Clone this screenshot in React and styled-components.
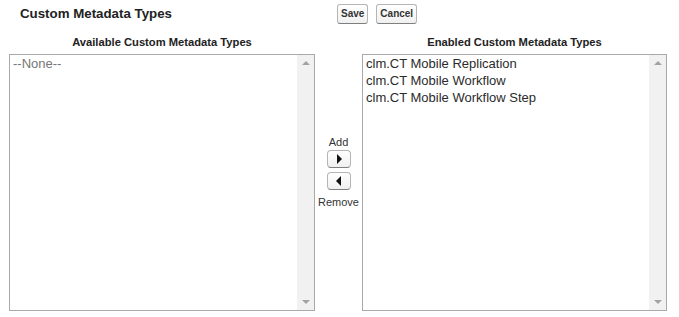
import styled, { createGlobalStyle } from "styled-components";

const GlobalStyle = createGlobalStyle`
  body {
    margin: 0;
    background: #ffffff;
    font-family: "Liberation Sans", Arial, sans-serif;
    color: #333;
  }
`;

const enabledTypes = [
  "clm.CT Mobile Replication",
  "clm.CT Mobile Workflow",
  "clm.CT Mobile Workflow Step",
];

const App = () => {
  return (
    <>
      <GlobalStyle />
      <Page>
        <Header>
          <Title>Custom Metadata Types</Title>
          <ButtonGroup>
            <Button>Save</Button>
            <Button>Cancel</Button>
          </ButtonGroup>
        </Header>
        <Columns>
          <Column $width={306}>
            <ColumnLabel>Available Custom Metadata Types</ColumnLabel>
            <ListBox>
              <Options>
                <Option $muted>--None--</Option>
              </Options>
              <Scrollbar>
                <ArrowUp />
                <ArrowDown />
              </Scrollbar>
            </ListBox>
          </Column>
          <Middle>
            <SmallText>Add</SmallText>
            <ArrowButton>
              <TriRight />
            </ArrowButton>
            <ArrowButton>
              <TriLeft />
            </ArrowButton>
            <SmallText $gap={3}>Remove</SmallText>
          </Middle>
          <Column $width={305}>
            <ColumnLabel>Enabled Custom Metadata Types</ColumnLabel>
            <ListBox>
              <Options>
                {enabledTypes.map((t) => (
                  <Option key={t}>{t}</Option>
                ))}
              </Options>
              <Scrollbar>
                <ArrowUp />
                <ArrowDown />
              </Scrollbar>
            </ListBox>
          </Column>
        </Columns>
      </Page>
    </>
  );
};

const Page = styled.div`
  width: 679px;
`;

const Header = styled.div`
  display: flex;
  align-items: center;
  height: 27px;
  padding-left: 20px;
`;

const Title = styled.div`
  width: 317px;
  font-size: 13.3px;
  font-weight: bold;
  color: #222;
`;

const ButtonGroup = styled.div`
  display: flex;
  gap: 8px;
  margin-top: 1px;
`;

const Button = styled.button`
  font-family: "Liberation Sans", Arial, sans-serif;
  font-size: 10px;
  font-weight: bold;
  color: #333;
  padding: 3px 3px;
  border: 1px solid #b5b5b5;
  border-bottom-color: #7f7f7f;
  border-radius: 3px;
  background: linear-gradient(#ffffff, #f0f0f0);
  line-height: 12px;
  cursor: pointer;
`;

const Columns = styled.div`
  display: flex;
  padding: 8px 0 0 9px;
`;

const Column = styled.div`
  width: ${(p) => p.$width}px;
  display: flex;
  flex-direction: column;
`;

const ColumnLabel = styled.div`
  text-align: center;
  font-size: 11.2px;
  font-weight: bold;
  color: #222;
  line-height: 14px;
  margin-bottom: 5px;
`;

const ListBox = styled.div`
  height: 257px;
  box-sizing: border-box;
  border: 1px solid #a9a9a9;
  display: flex;
`;

const Options = styled.div`
  flex: 1;
  padding: 0 3px;
`;

const Option = styled.div`
  font-size: 13px;
  line-height: 17px;
  color: ${(p) => (p.$muted ? "#777" : "#2b2b2b")};
`;

const Scrollbar = styled.div`
  width: 17px;
  background: #f1f1f1;
  display: flex;
  flex-direction: column;
  justify-content: space-between;
  align-items: center;
  padding: 6px 0;
`;

const ArrowUp = styled.div`
  width: 0;
  height: 0;
  border-left: 4px solid transparent;
  border-right: 4px solid transparent;
  border-bottom: 4px solid #a3a3a3;
`;

const ArrowDown = styled.div`
  width: 0;
  height: 0;
  border-left: 4px solid transparent;
  border-right: 4px solid transparent;
  border-top: 4px solid #a3a3a3;
`;

const Middle = styled.div`
  width: 47px;
  display: flex;
  flex-direction: column;
  align-items: center;
  padding-top: 101px;
`;

const SmallText = styled.div`
  font-size: 11px;
  line-height: 13px;
  color: #333;
  margin-top: ${(p) => p.$gap || 0}px;
`;

const ArrowButton = styled.div`
  width: 24px;
  height: 18px;
  box-sizing: border-box;
  margin: 1px 0 3px;
  border: 1px solid #b5b5b5;
  border-bottom-color: #7f7f7f;
  border-radius: 4px;
  background: linear-gradient(#ffffff, #f0f0f0);
  display: flex;
  align-items: center;
  justify-content: center;
`;

const TriRight = styled.div`
  width: 0;
  height: 0;
  border-top: 5px solid transparent;
  border-bottom: 5px solid transparent;
  border-left: 5px solid #111;
  margin-left: 1px;
`;

const TriLeft = styled.div`
  width: 0;
  height: 0;
  border-top: 5px solid transparent;
  border-bottom: 5px solid transparent;
  border-right: 5px solid #111;
  margin-right: 1px;
`;

export default App;
